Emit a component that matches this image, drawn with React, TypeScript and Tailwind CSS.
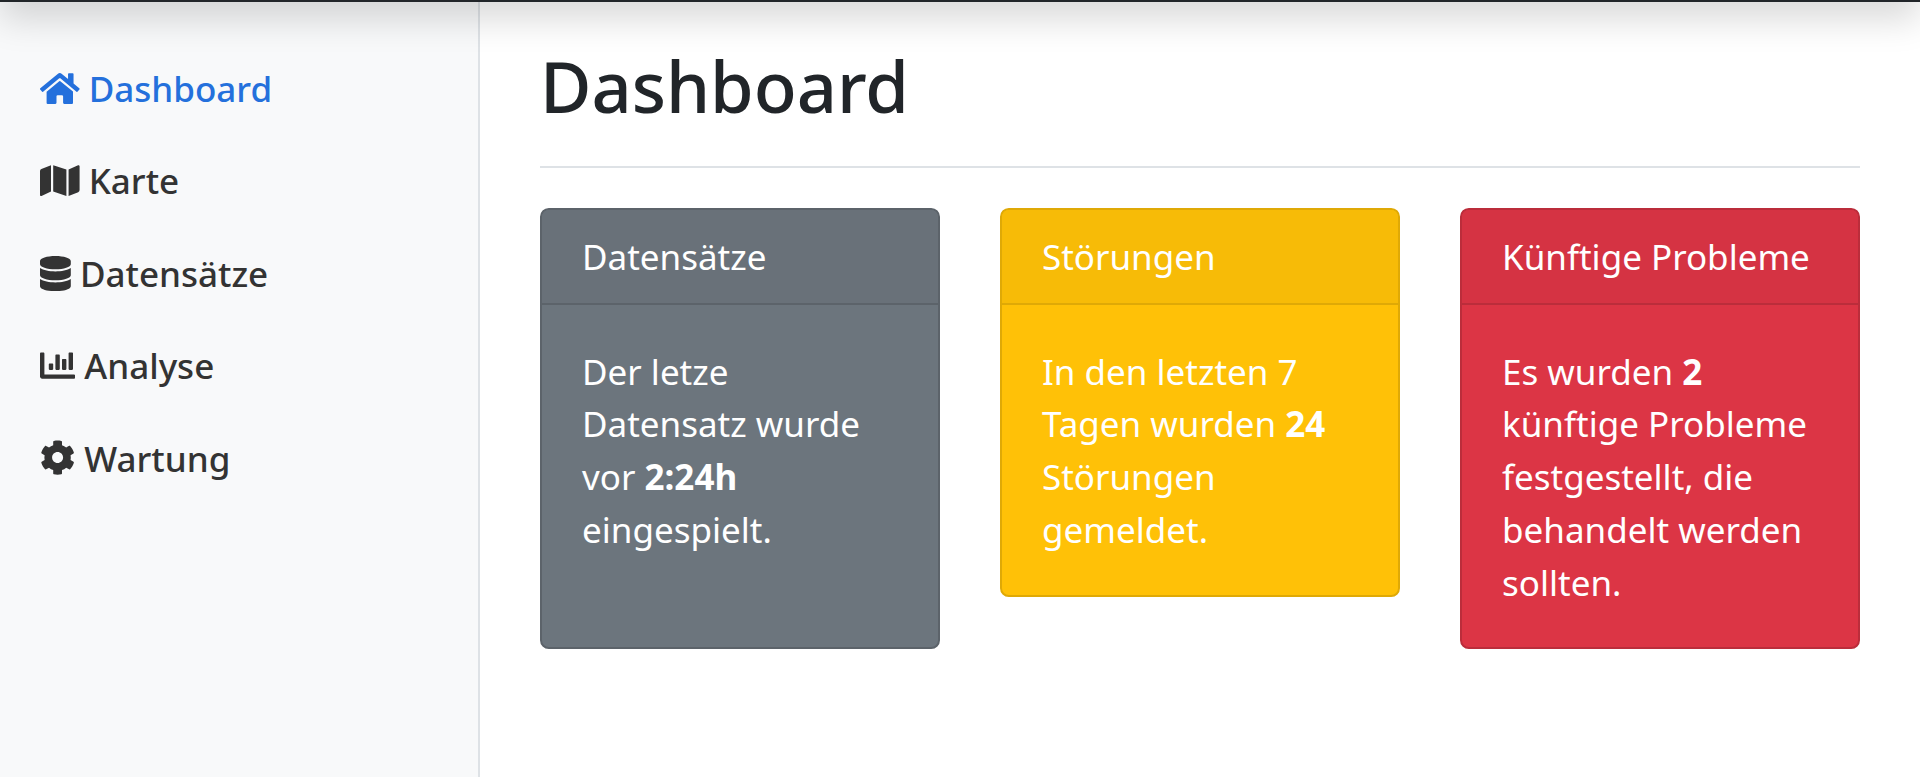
import { FaHome, FaMap, FaDatabase, FaChartBar, FaCog } from "react-icons/fa";
import type { ReactNode } from "react";

const nav = [
  { label: "Dashboard", icon: <FaHome className="inline-block h-[35.2px] w-[39.6px] align-[-4px]" />, active: true },
  { label: "Karte", icon: <FaMap className="inline-block h-[35.2px] w-[39.6px] align-[-4px]" /> },
  { label: "Datensätze", icon: <FaDatabase className="inline-block h-[35.2px] w-[30.8px] align-[-4px]" /> },
  { label: "Analyse", icon: <FaChartBar className="inline-block h-[35.2px] w-[35.2px] align-[-4px]" /> },
  { label: "Wartung", icon: <FaCog className="inline-block h-[35.2px] w-[35.2px] align-[-4px]" /> },
];

function Card({ title, head, body, border, children, stretch }: { title: string; head: string; body: string; border: string; children: ReactNode; stretch?: boolean }) {
  return (
    <div className={`w-[400px] rounded-[8.8px] border-2 text-white ${body} ${border} ${stretch ? "self-stretch" : "self-start"}`}>
      <div className={`h-[95px] px-[40px] pt-[21px] border-b-2 rounded-t-[7px] text-[35px] leading-[52.8px] ${head} ${border}`}>{title}</div>
      <div className="px-[40px] pt-[41px] pb-[38px] text-[35px] leading-[52.8px]">{children}</div>
    </div>
  );
}

export default function App() {
  return (
    <div className="relative h-[777px] overflow-hidden bg-white font-['Noto_Sans',sans-serif] text-[35.2px] leading-[52.8px] text-[#212529]">
      <div className="absolute inset-x-0 top-[-58px] z-10 h-[60px] bg-[#212529] shadow-[0_17.6px_35.2px_rgba(0,0,0,0.15)]" />
      <div className="flex h-[777px]">
        <aside className="w-[480px] shrink-0 border-r-2 border-[#dee2e6] bg-[#f8f9fa] pt-[63px] pl-[40px] text-[35px] font-medium">
          {nav.map((n) => (
            <div key={n.label} className={`h-[92.4px] whitespace-pre ${n.active ? "text-[#2470dc]" : "text-[#333333]"}`}>
              {n.icon} {n.label}
            </div>
          ))}
        </aside>
        <main className="flex-1 px-[60px]">
          <h1 className="mt-[44px] text-[70.4px] leading-[84.5px] font-medium">Dashboard</h1>
          <hr className="mt-[37px] border-t-2 border-[#dee2e6]" />
          <div className="mt-[40px] flex h-[441px] justify-between">
            <Card title="Datensätze" head="bg-[#697179]" body="bg-[#6c757d]" border="border-[#5c636a]" stretch>
              Der letze Datensatz wurde vor <b>2:24h</b> eingespielt.
            </Card>
            <Card title="Störungen" head="bg-[#f7bb07]" body="bg-[#ffc107]" border="border-[#dfa906]">
              In den letzten 7 Tagen wurden <b>24</b> Störungen gemeldet.
            </Card>
            <Card title="Künftige Probleme" head="bg-[#d53343]" body="bg-[#dc3545]" border="border-[#bb2d3b]" stretch>
              Es wurden <b>2</b> künftige Probleme festgestellt, die behandelt werden sollten.
            </Card>
          </div>
        </main>
      </div>
    </div>
  );
}
